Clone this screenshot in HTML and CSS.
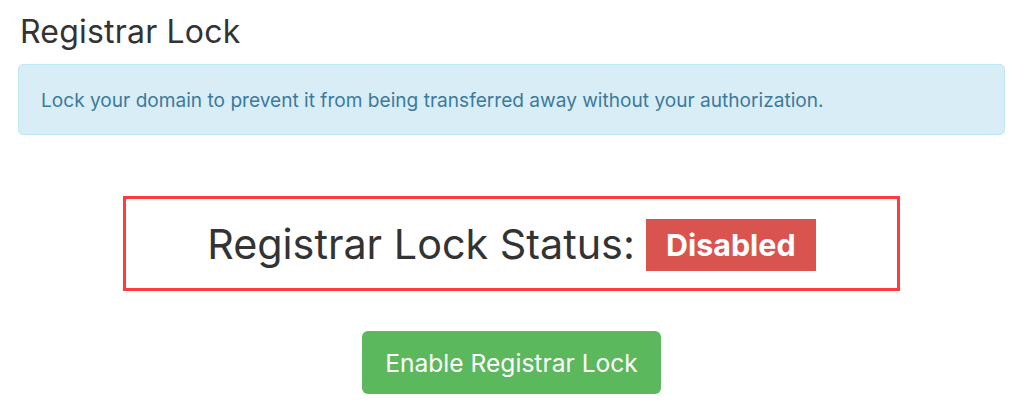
FILE: index.html
```html
<!DOCTYPE html>
<html>
<head>
<meta charset="utf-8">
<link rel="stylesheet" href="styles.css">
</head>
<body>
<div class="page">
  <h1 class="title">Registrar Lock</h1>
  <div class="alert">Lock your domain to prevent it from being transferred away without your authorization.</div>
  <div class="status-wrap">
    <div class="status-box">
      <span class="status-text">Registrar Lock Status:</span>
      <span class="label">Disabled</span>
    </div>
    <button class="btn">Enable Registrar Lock</button>
  </div>
</div>
</body>
</html>
```
FILE: styles.css
```css
html, body {
  margin: 0;
  padding: 0;
  background: #fff;
}
body {
  font-family: Inter, "Noto Sans", sans-serif;
  color: #333;
}
.page {
  width: 987px;
  margin-left: 18px;
  display: flex;
  flex-direction: column;
}
.title {
  margin: 0;
  padding-top: 12px;
  padding-left: 2px;
  font-size: 32px;
  font-weight: 400;
  line-height: 40px;
  color: #333;
  letter-spacing: 0.2px;
}
.alert {
  margin-top: 12px;
  height: 71px;
  box-sizing: border-box;
  background: #d9edf7;
  border: 1px solid #bce8f1;
  border-radius: 5px;
  color: #3b7a9c;
  font-size: 19.1px;
  padding-left: 22px;
  display: flex;
  align-items: center;
}
.status-wrap {
  display: flex;
  flex-direction: column;
  align-items: center;
  margin-top: 61px;
}
.status-box {
  width: 777px;
  height: 95px;
  box-sizing: border-box;
  border: 3px solid #ff3b3f;
  display: flex;
  align-items: center;
  justify-content: center;
  gap: 11px;
}
.status-text {
  font-size: 41.3px;
  color: #333;
}
.label {
  background: #d9534f;
  color: #fff;
  font-weight: 700;
  font-size: 30.4px;
  height: 52px;
  width: 170px;
  display: flex;
  align-items: center;
  justify-content: center;
  margin-top: 3px;
}
.btn {
  margin-top: 40px;
  width: 299px;
  height: 63px;
  background: #5cb85c;
  border: none;
  border-radius: 6px;
  color: #fff;
  font-family: Inter, "Noto Sans", sans-serif;
  font-size: 24.6px;
  padding: 0;
}
```
